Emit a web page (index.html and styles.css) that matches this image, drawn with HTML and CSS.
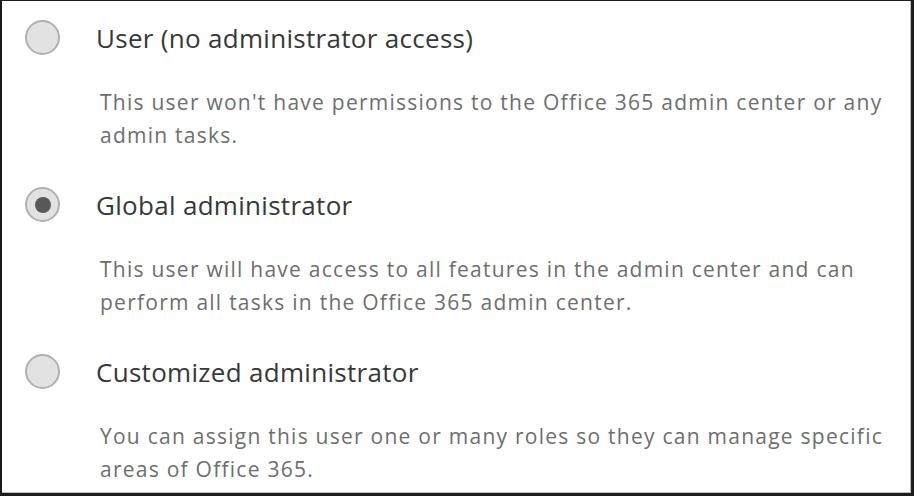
FILE: index.html
```html
<!DOCTYPE html>
<html lang="en">
<head>
<meta charset="utf-8">
<title>Roles</title>
<link rel="stylesheet" href="styles.css">
</head>
<body>
<div class="frame">
  <div class="option">
    <span class="radio"></span>
    <div class="label">User (no administrator access)</div>
    <p class="desc">This user won't have permissions to the Office 365 admin center or any admin tasks.</p>
  </div>
  <div class="option">
    <span class="radio checked"></span>
    <div class="label">Global administrator</div>
    <p class="desc">This user will have access to all features in the admin center and can perform all tasks in the Office 365 admin center.</p>
  </div>
  <div class="option">
    <span class="radio"></span>
    <div class="label">Customized administrator</div>
    <p class="desc">You can assign this user one or many roles so they can manage specific areas of Office 365.</p>
  </div>
</div>
</body>
</html>
```
FILE: styles.css
```css
html, body {
  margin: 0;
  padding: 0;
  background: #ffffff;
}
.frame {
  box-sizing: border-box;
  width: 914px;
  height: 496px;
  overflow: hidden;
  border-style: solid;
  border-color: #1c1c1c;
  border-width: 1px 3px 3px 2px;
  box-shadow: inset -1px -1px 0 #bdbdbd;
  padding: 19px 0 0 23px;
  font-family: "Open Sans", "Noto Sans", sans-serif;
  display: flex;
  flex-direction: column;
}
.option {
  flex-shrink: 0;
  display: grid;
  grid-template-columns: 71px 1fr;
  height: 167px;
  align-content: start;
}
.radio {
  box-sizing: border-box;
  width: 35px;
  height: 35px;
  border-radius: 50%;
  border: 2px solid #b0b0b0;
  background: #e2e2e2;
  display: flex;
  align-items: center;
  justify-content: center;
}
.radio.checked::after {
  content: "";
  width: 16px;
  height: 16px;
  border-radius: 50%;
  background: #585858;
}
.label {
  font-size: 26px;
  line-height: 36px;
  letter-spacing: 0.3px;
  color: #383838;
}
.desc {
  grid-column: 2;
  margin: 30px 0 0 4px;
  width: 800px;
  font-size: 21px;
  line-height: 33px;
  letter-spacing: 1.25px;
  color: #6e6e6e;
}
```
